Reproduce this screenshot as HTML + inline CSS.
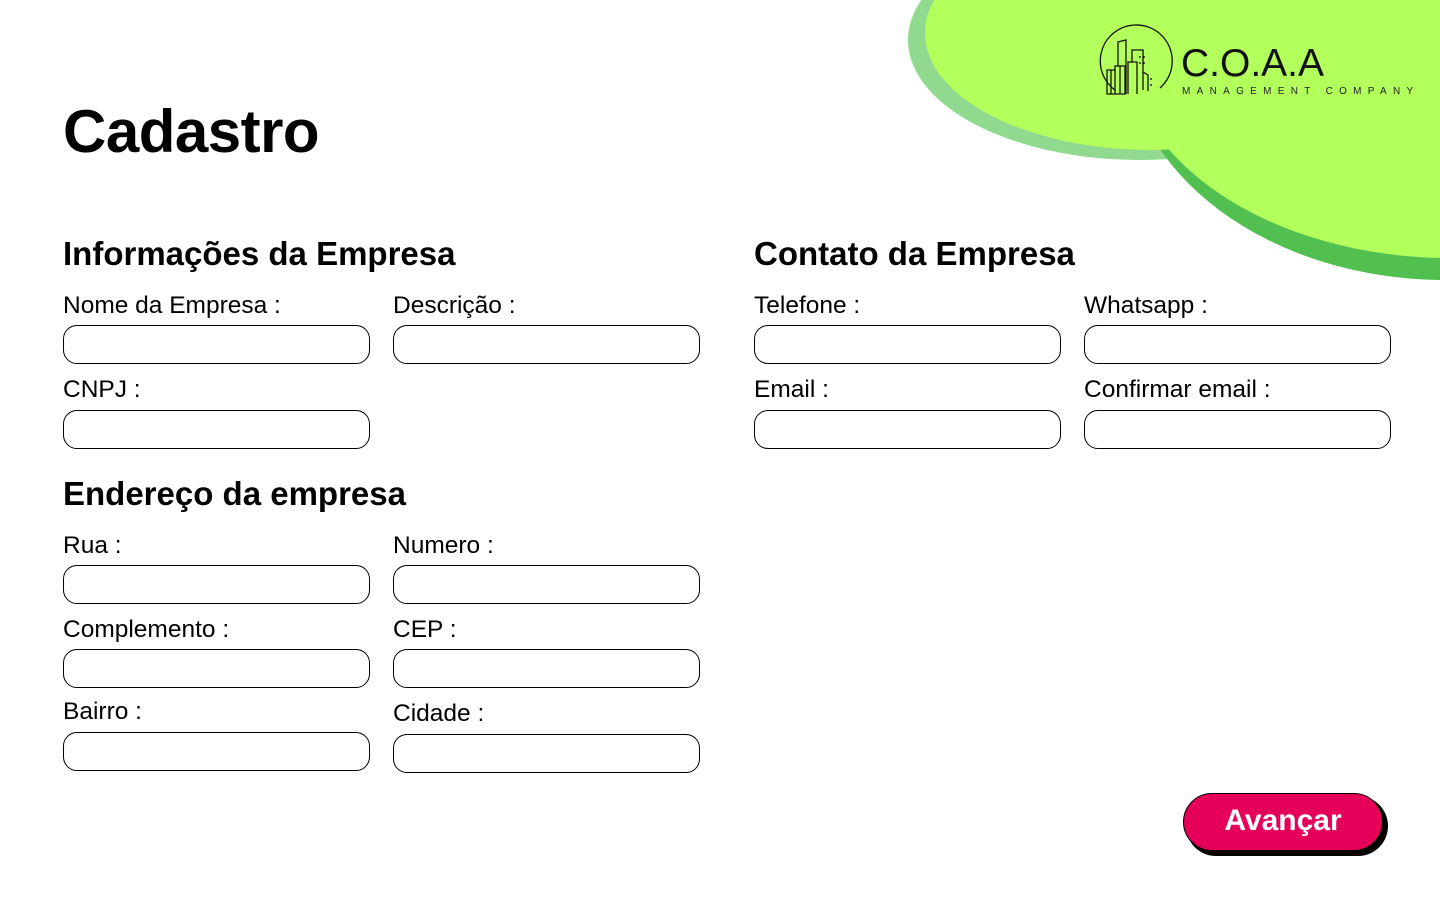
<!DOCTYPE html>
<html><head><meta charset="utf-8"><style>
body{margin:0;width:1440px;height:900px;background:#fff;position:relative;overflow:hidden;font-family:"Liberation Sans",sans-serif;color:#000}
.a{position:absolute}
h1{position:absolute;left:63px;top:97px;margin:0;font-size:60px;font-weight:bold;letter-spacing:-0.5px}
h2{position:absolute;margin:0;font-size:33px;font-weight:bold}
.l{position:absolute;font-size:24.5px}
.i{position:absolute;width:305px;height:37px;border:1px solid #000;border-radius:14px}
</style></head><body>
<svg class="a" style="left:0;top:0" width="1440" height="300">
<ellipse cx="1140" cy="40" rx="232" ry="120" fill="#90d98e"/>
<ellipse cx="1445" cy="40" rx="320" ry="240" fill="#52c050"/>
<ellipse cx="1152" cy="33" rx="227" ry="117" fill="#b3ff5c"/>
<ellipse cx="1450" cy="40" rx="325" ry="218" fill="#b3ff5c"/>
<g fill="none" stroke="#111" stroke-width="1.3">
<path d="M1115 90 A36 36 0 1 1 1160 88"/>
<path d="M1107 70h8v24h-8zM1111 70v24M1115 66h10v28h-10zM1120 66v28M1118 66v-24l8-2v54M1128 94v-32h9v32M1132 62v-12h11v40M1143 72l5 3v16M1140 56v2M1140 62v2M1144 56v2M1144 62v2M1151 78v2M1151 84v2"/>
</g>
<text x="1181" y="76" font-family="Liberation Sans" font-size="39" fill="#111">C.O.A.A</text>
<text x="1182" y="94" font-family="Liberation Sans" font-size="10" letter-spacing="6.3" fill="#222">MANAGEMENT COMPANY</text>
</svg>
<h1>Cadastro</h1>
<h2 style="left:63px;top:235px">Informações da Empresa</h2>
<h2 style="left:754px;top:235px">Contato da Empresa</h2>
<h2 style="left:63px;top:475px">Endereço da empresa</h2>
<div class="l" style="left:63px;top:292px">Nome da Empresa :</div>
<div class="l" style="left:393px;top:292px">Descrição :</div>
<div class="l" style="left:63px;top:376px">CNPJ :</div>
<div class="l" style="left:754px;top:292px">Telefone :</div>
<div class="l" style="left:1084px;top:292px">Whatsapp :</div>
<div class="l" style="left:754px;top:376px">Email :</div>
<div class="l" style="left:1084px;top:376px">Confirmar email :</div>
<div class="l" style="left:63px;top:532px">Rua :</div>
<div class="l" style="left:393px;top:532px">Numero :</div>
<div class="l" style="left:63px;top:616px">Complemento :</div>
<div class="l" style="left:393px;top:616px">CEP :</div>
<div class="l" style="left:63px;top:698px">Bairro :</div>
<div class="l" style="left:393px;top:700px">Cidade :</div>
<div class="i" style="left:63px;top:325px"></div>
<div class="i" style="left:393px;top:325px"></div>
<div class="i" style="left:63px;top:410px"></div>
<div class="i" style="left:754px;top:325px"></div>
<div class="i" style="left:1084px;top:325px"></div>
<div class="i" style="left:754px;top:410px"></div>
<div class="i" style="left:1084px;top:410px"></div>
<div class="i" style="left:63px;top:565px"></div>
<div class="i" style="left:393px;top:565px"></div>
<div class="i" style="left:63px;top:649px"></div>
<div class="i" style="left:393px;top:649px"></div>
<div class="i" style="left:63px;top:732px"></div>
<div class="i" style="left:393px;top:734px"></div>
<div class="a" style="left:1186px;top:796px;width:202px;height:60px;border-radius:30px;background:#000"></div>
<div class="a" style="left:1183px;top:793px;width:200px;height:58px;border-radius:30px;background:#e5005a;border:1px solid #000;box-sizing:border-box;color:#fff;font-weight:bold;font-size:30px;text-align:center;line-height:54px">Avançar</div>
</body></html>
